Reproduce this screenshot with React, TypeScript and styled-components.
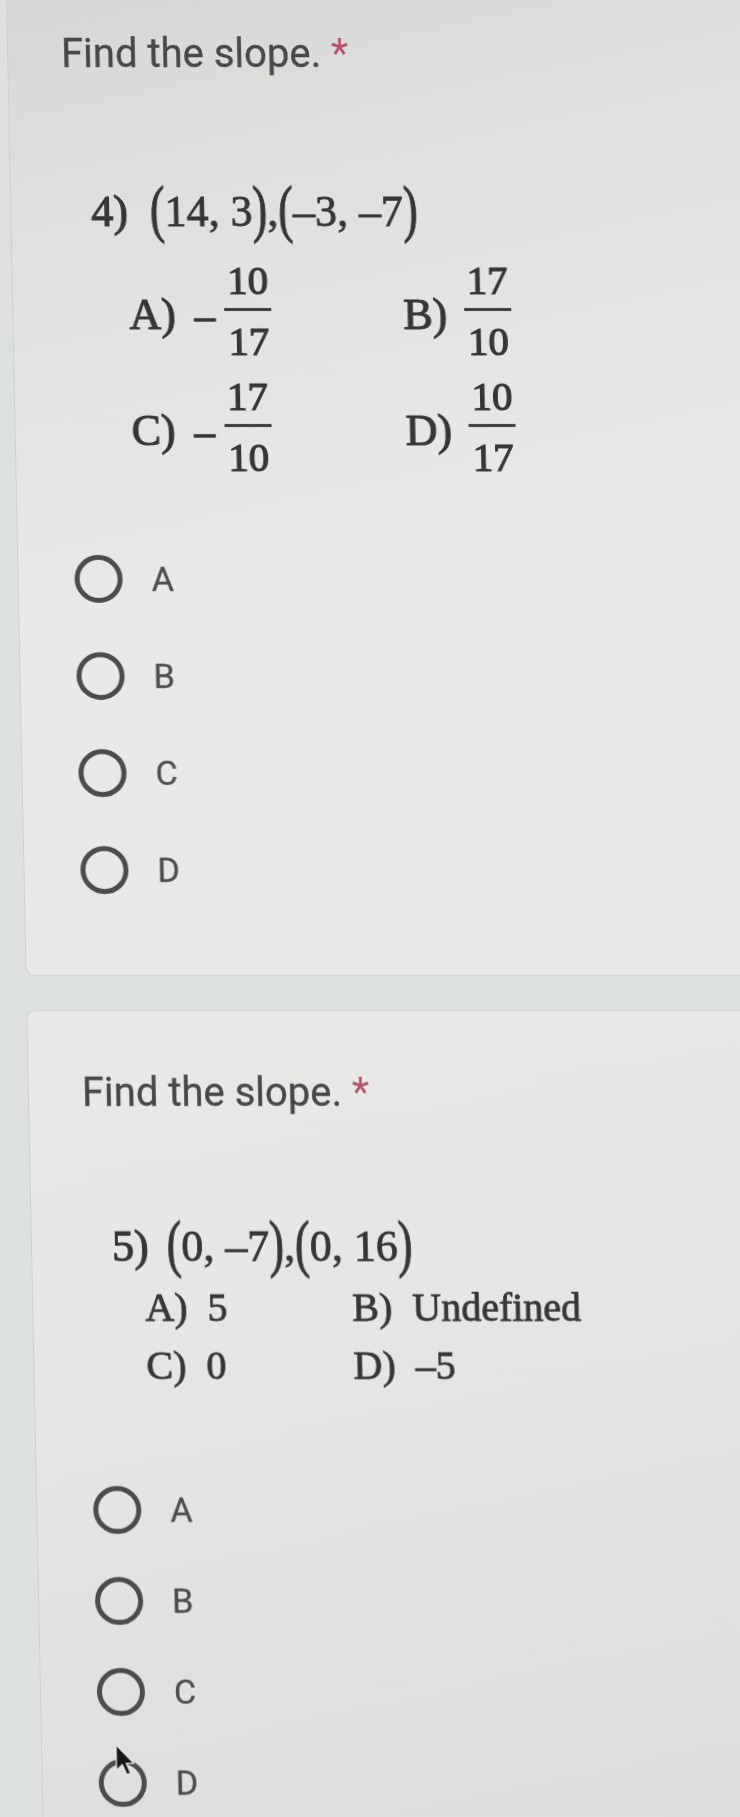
import React from 'react';
import styled, { createGlobalStyle } from 'styled-components';

const GlobalStyle = createGlobalStyle`
  html, body {
    margin: 0;
    padding: 0;
    background: #dce1df;
    overflow: hidden;
  }
`;

// the reference is a photo of a screen, taken a little off-axis
const Page = styled.div`
  width: 740px;
  height: 1817px;
  box-sizing: border-box;
  padding-left: 6px;
  transform: skewX(1.15deg);
  transform-origin: 0 0;
  filter: blur(0.35px);
`;

const Card = styled.section<{ $first?: boolean }>`
  position: relative;
  box-sizing: border-box;
  display: flex;
  flex-direction: column;
  margin-right: -30px;
  padding-left: 53px;
  border: 1px solid #cfd0ce;
  ${(p) =>
    p.$first
      ? `
    height: 976px;
    border-top: none;
    border-radius: 0 0 9px 9px;
    background: linear-gradient(168deg, #d7d7d6 0%, #e0e0df 22%, #e9e9e7 55%, #e8e8e6 100%);
  `
      : `
    height: 807px;
    margin-top: 34px;
    border-bottom: none;
    border-radius: 9px 9px 0 0;
    background: linear-gradient(168deg, #e9e9e7 0%, #e5e5e3 45%, #dcdcdb 100%);
  `}
`;

const Title = styled.h2<{ $top: number }>`
  margin: ${(p) => p.$top}px 0 0;
  font-family: Roboto, 'Noto Sans', Arial, sans-serif;
  font-weight: 400;
  font-size: 40px;
  line-height: 48px;
  color: #48484a;
  -webkit-text-stroke: 0.3px #48484a;
`;

const Star = styled.span`
  color: #b4546a;
  -webkit-text-stroke: 0;
`;

const Sheet = styled.div<{ $top: number }>`
  margin: ${(p) => p.$top}px 0 0 27px;
  font-family: 'Liberation Serif', 'Times New Roman', serif;
  color: #363636;
  -webkit-text-stroke: 0.8px #363636;
`;

const ProblemLine = styled.div`
  display: flex;
  align-items: baseline;
  height: 60px;
  font-size: 44px;
  line-height: 60px;
`;

const Num = styled.span<{ $gap: number }>`
  margin-right: ${(p) => p.$gap}px;
  -webkit-text-stroke: 1.1px #363636;
`;

const Paren = styled.span`
  display: inline-block;
  transform: scaleY(1.45);
  transform-origin: 50% 60%;
`;

const AnswerGrid = styled.div<{ $top: number; $left: number; $col: number; $row: number }>`
  display: grid;
  grid-template-columns: ${(p) => p.$col}px auto;
  grid-auto-rows: ${(p) => p.$row}px;
  margin: ${(p) => p.$top}px 0 0 ${(p) => p.$left}px;
`;

const Choice = styled.div`
  display: flex;
  align-items: center;
`;

const ChoiceLetter = styled.span`
  font-size: 44px;
  line-height: 48px;
  margin-top: 8px;
  -webkit-text-stroke: 1.1px #363636;
`;

const Minus = styled.span`
  font-size: 40px;
  line-height: 48px;
  margin: 10px 0 0 19px;
  -webkit-text-stroke: 1.6px #363636;
`;

const Fraction = styled.span<{ $gap: number }>`
  display: inline-flex;
  flex-direction: column;
  align-items: center;
  margin-left: ${(p) => p.$gap}px;
  font-size: 41px;
  line-height: 41px;
  -webkit-text-stroke: 1.2px #363636;
`;

const FracPart = styled.span`
  padding: 0 3px;
`;

const FracBar = styled.span`
  align-self: stretch;
  height: 2.5px;
  margin: 7px 0 10px;
  background: #3d3d3d;
`;

const TextChoice = styled.div`
  display: flex;
  gap: 20px;
  font-size: 40px;
  line-height: 58px;
`;

const Options = styled.div<{ $top: number; $row: number }>`
  display: grid;
  grid-auto-rows: ${(p) => p.$row}px;
  margin: ${(p) => p.$top}px 0 0 3px;
`;

const Option = styled.label`
  display: flex;
  align-items: center;
  gap: 29px;
  font-family: Roboto, 'Noto Sans', Arial, sans-serif;
  font-size: 34px;
  line-height: 40px;
  color: #4e4e4e;
  -webkit-text-stroke: 0.3px #4e4e4e;
`;

const Radio = styled.span`
  position: relative;
  flex: none;
  box-sizing: border-box;
  width: 48px;
  height: 48px;
  border: 5px solid #4c4c4c;
  border-radius: 50%;
`;

const Cursor = styled.svg`
  position: absolute;
  left: 12px;
  top: -20px;
  width: 20px;
  height: 32px;
`;

type Frac = { sign?: boolean; num: string; den: string };

const fracChoices: { letter: string; frac: Frac }[] = [
  { letter: 'A)', frac: { sign: true, num: '10', den: '17' } },
  { letter: 'B)', frac: { num: '17', den: '10' } },
  { letter: 'C)', frac: { sign: true, num: '17', den: '10' } },
  { letter: 'D)', frac: { num: '10', den: '17' } },
];

const textChoices = [
  { letter: 'A)', value: '5' },
  { letter: 'B)', value: 'Undefined' },
  { letter: 'C)', value: '0' },
  { letter: 'D)', value: '\u20135' },
];

const letters = ['A', 'B', 'C', 'D'];

const RadioList = ({ top, row, cursorOn }: { top: number; row: number; cursorOn?: string }) => (
  <Options $top={top} $row={row}>
    {letters.map((l) => (
      <Option key={l}>
        <Radio>
          {cursorOn === l && (
            <Cursor viewBox="0 0 12.5 20">
              <path
                d="M0.6 0.6 L0.6 16.4 L4.3 12.9 L7 19.2 L9.4 18.2 L6.8 12 L11.6 12 Z"
                fill="#161616"
                stroke="#e8e8e8"
                strokeWidth="0.8"
                strokeLinejoin="round"
              />
            </Cursor>
          )}
        </Radio>
        {l}
      </Option>
    ))}
  </Options>
);

export default function App() {
  return (
    <>
      <GlobalStyle />
      <Page>
        <Card $first>
          <Title $top={30}>
            Find the slope. <Star>*</Star>
          </Title>
          <Sheet $top={104}>
            <ProblemLine>
              <Num $gap={22}>4)</Num>
              <Paren>(</Paren>14, 3<Paren>)</Paren>,<Paren>(</Paren>{'\u2013'}3, {'\u2013'}7
              <Paren>)</Paren>
            </ProblemLine>
            <AnswerGrid $top={11} $left={36} $col={274} $row={116}>
              {fracChoices.map(({ letter, frac }) => (
                <Choice key={letter}>
                  <ChoiceLetter>{letter}</ChoiceLetter>
                  {frac.sign && <Minus>{'\u2013'}</Minus>}
                  <Fraction $gap={frac.sign ? 10 : 17}>
                    <FracPart>{frac.num}</FracPart>
                    <FracBar />
                    <FracPart>{frac.den}</FracPart>
                  </Fraction>
                </Choice>
              ))}
            </AnswerGrid>
          </Sheet>
          <RadioList top={45} row={97} />
        </Card>

        <Card>
          <Title $top={58}>
            Find the slope. <Star>*</Star>
          </Title>
          <Sheet $top={100}>
            <ProblemLine>
              <Num $gap={18}>5)</Num>
              <Paren>(</Paren>0, {'\u2013'}7<Paren>)</Paren>,<Paren>(</Paren>0, 16<Paren>)</Paren>
            </ProblemLine>
            <AnswerGrid $top={2} $left={32} $col={207} $row={58}>
              {textChoices.map((c) => (
                <TextChoice key={c.letter}>
                  <span>{c.letter}</span>
                  <span>{c.value}</span>
                </TextChoice>
              ))}
            </AnswerGrid>
          </Sheet>
          <RadioList top={69} row={91} cursorOn="D" />
        </Card>
      </Page>
    </>
  );
}
